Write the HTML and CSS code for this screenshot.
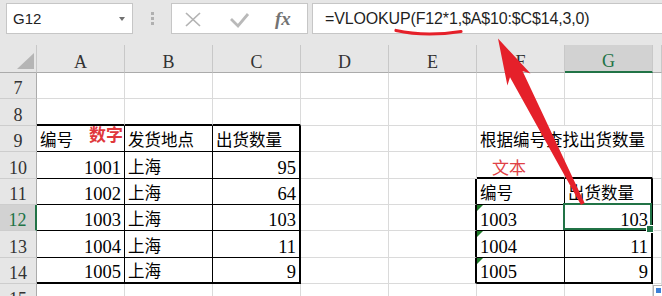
FILE: index.html
```html
<!DOCTYPE html>
<html lang="zh-CN">
<head>
    <meta charset="UTF-8">
    <title>VLOOKUP</title>
    <link rel="stylesheet" href="styles.css">
</head>
<body>
    <div class="toolbar">
        <div class="namebox"><span>G12</span><span class="caret"></span></div>
        <div class="grip"><i></i><i></i><i></i></div>
        <div class="fxbar">
            <svg width="135" height="29" viewBox="0 0 135 29">
                <path d="M14 9 L28 22 M28 9 L14 22" stroke="#b3b3b3" stroke-width="1.7" fill="none"/>
                <path d="M59 15 L66 22 L76 10" stroke="#b9b9b9" stroke-width="2.8" fill="none"/>
                <text x="103" y="21" font-family="Liberation Serif" font-style="italic" font-weight="bold" font-size="19" fill="#737373">fx</text>
            </svg>
        </div>
        <div class="formula">=VLOOKUP(F12*1,$A$10:$C$14,3,0)</div>
    </div>

    <div class="sheet">
        <!-- column headers -->
        <div class="hc corner"><span class="tri"></span></div>
        <div class="hc">A</div>
        <div class="hc">B</div>
        <div class="hc">C</div>
        <div class="hc">D</div>
        <div class="hc">E</div>
        <div class="hc">F</div>
        <div class="hc on">G</div>
        <div class="hc"></div>

        <!-- 7 -->
        <div class="rh">7</div>
        <div class="c"></div><div class="c"></div><div class="c"></div><div class="c"></div>
        <div class="c"></div><div class="c"></div><div class="c"></div><div class="c"></div>

        <!-- 8 -->
        <div class="rh">8</div>
        <div class="c k-B"></div><div class="c k-B"></div><div class="c k-B"></div><div class="c"></div>
        <div class="c"></div><div class="c"></div><div class="c"></div><div class="c"></div>

        <!-- 9 -->
        <div class="rh">9</div>
        <div class="c k-b k-r split"><span class="t">编号</span><span class="note">数字</span></div>
        <div class="c k-b k-r t">发货地点</div>
        <div class="c k-b k-R t">出货数量</div>
        <div class="c"></div>
        <div class="c"></div>
        <div class="c t over">根据编号查找出货数量</div>
        <div class="c"></div>
        <div class="c"></div>

        <!-- 10 -->
        <div class="rh">10</div>
        <div class="c k-b k-r n r">1001</div>
        <div class="c k-b k-r t">上海</div>
        <div class="c k-b k-R n r">95</div>
        <div class="c"></div>
        <div class="c"></div>
        <div class="c k-B"><span class="note thin">文本</span></div>
        <div class="c k-B"></div>
        <div class="c"></div>

        <!-- 11 -->
        <div class="rh">11</div>
        <div class="c k-b k-r n r">1002</div>
        <div class="c k-b k-r t">上海</div>
        <div class="c k-b k-R n r">64</div>
        <div class="c"></div>
        <div class="c k-R"></div>
        <div class="c k-b k-r t">编号</div>
        <div class="c k-b k-R t">出货数量</div>
        <div class="c"></div>

        <!-- 12 -->
        <div class="rh on">12</div>
        <div class="c k-b k-r n r">1003</div>
        <div class="c k-b k-r t">上海</div>
        <div class="c k-b k-R n r">103</div>
        <div class="c"></div>
        <div class="c k-R"></div>
        <div class="c k-b k-r n flag">1003</div>
        <div class="c k-b k-R n r sel">103</div>
        <div class="c"></div>

        <!-- 13 -->
        <div class="rh">13</div>
        <div class="c k-b k-r n r">1004</div>
        <div class="c k-b k-r t">上海</div>
        <div class="c k-b k-R n r">11</div>
        <div class="c"></div>
        <div class="c k-R"></div>
        <div class="c k-b k-r n flag">1004</div>
        <div class="c k-b k-R n r">11</div>
        <div class="c"></div>

        <!-- 14 -->
        <div class="rh">14</div>
        <div class="c k-B k-r n r">1005</div>
        <div class="c k-B k-r t">上海</div>
        <div class="c k-B k-R n r">9</div>
        <div class="c"></div>
        <div class="c k-R"></div>
        <div class="c k-B k-r n flag">1005</div>
        <div class="c k-B k-R n r">9</div>
        <div class="c"></div>

        <!-- 15 -->
        <div class="rh">15</div>
        <div class="c"></div><div class="c"></div><div class="c"></div><div class="c"></div>
        <div class="c"></div><div class="c"></div><div class="c"></div><div class="c"></div>
    </div>

    <div class="qa"></div>

    <!-- red annotation drawn on top of the screenshot -->
    <svg class="marks" width="662" height="296" viewBox="0 0 662 296">
        <path d="M396 30.5 Q425 37 461 31.5" stroke="#e5202a" stroke-width="3.2" stroke-linecap="round" fill="none"/>
        <polygon fill="#e5202a" points="498,38.5 530.5,73.5 522.5,70.9 584.6,203.1 581,205 510,77.3 507.4,85.4"/>
    </svg>
</body>
</html>
```

FILE: styles.css
```css
* {
    box-sizing: border-box;
}
body {
    margin: 0;
    width: 662px;
    height: 296px;
    overflow: hidden;
    position: relative;
    background: #e6e6e6;
    font-family: "Liberation Serif", "Noto Sans CJK SC", serif;
    color: #000;
}

/* formula bar */
.toolbar {
    display: flex;
    align-items: flex-start;
    height: 45px;
    padding-top: 3px;
}
.namebox {
    margin-left: 6px;
    width: 127px;
    height: 31px;
    background: #fff;
    border: 1px solid #c6c6c6;
    display: flex;
    align-items: center;
    justify-content: space-between;
    padding: 0 7px 0 6px;
    font: 15px "Liberation Sans", sans-serif;
    color: #222;
}
.caret {
    width: 0;
    height: 0;
    border-left: 3.5px solid transparent;
    border-right: 3.5px solid transparent;
    border-top: 4px solid #707070;
}
.grip {
    width: 38px;
    display: flex;
    flex-direction: column;
    align-items: center;
    gap: 2px;
    padding-top: 9px;
}
.grip i {
    width: 3px;
    height: 3px;
    background: #b0b0b0;
}
.fxbar {
    width: 137px;
    height: 31px;
    background: #fff;
    border: 1px solid #c6c6c6;
}
.fxbar svg {
    display: block;
}
.formula {
    flex: 1;
    margin-left: 4px;
    margin-right: -10px;
    height: 31px;
    background: #fff;
    border: 1px solid #c6c6c6;
    padding-left: 12px;
    font: 16px "Liberation Sans", sans-serif;
    letter-spacing: -0.15px;
    line-height: 29px;
    color: #1f1f1f;
}

/* grid */
.sheet {
    display: grid;
    grid-template-columns: 37px repeat(7, 88px) 1fr;
    grid-template-rows: 28px 26px 27px 26px 27px 26px 26px 27px 26px 26px;
}
.c, .hc, .rh {
    display: flex;
    align-items: flex-end;
    white-space: nowrap;
    line-height: 20px;
}
.hc {
    justify-content: center;
    border-right: 1px solid #c8c8c8;
    border-bottom: 1px solid #ababab;
    font-size: 18px;
    color: #333;
}
.hc.on {
    background: #d2d2d2;
    color: #217346;
    border-bottom: 2px solid #217346;
}
.corner {
    justify-content: flex-end;
    padding: 0 2px 3px 0;
}
.tri {
    width: 0;
    height: 0;
    border-left: 17px solid transparent;
    border-bottom: 16px solid #b5b5b5;
}
.rh {
    justify-content: center;
    border-right: 1px solid #ababab;
    border-bottom: 1px solid #cdcdcd;
    font-size: 18px;
    color: #333;
}
.rh.on {
    background: #d2d2d2;
    color: #217346;
    border-right: 2px solid #217346;
}
.c {
    background: #fff;
    border-right: 1px solid #dadada;
    border-bottom: 1px solid #dadada;
    padding: 0 3px;
}

/* table borders */
.k-b { border-bottom: 1px solid #000; }
.k-B { border-bottom: 2px solid #000; }
.k-r { border-right: 1px solid #000; }
.k-R { border-right: 2px solid #000; }

.t {
    font-family: "Noto Sans CJK SC", sans-serif;
    font-size: 16.5px;
    padding-bottom: 2px;
}
.n {
    font-size: 18.5px;
}
.r {
    justify-content: flex-end;
}
.split {
    justify-content: space-between;
}
/* text spilling into the next cell, like Excel does */
.over {
    border-right-color: transparent;
    z-index: 1;
}
.note {
    color: #e0383c;
    font-family: "Noto Sans CJK SC", sans-serif;
    font-size: 17px;
    font-weight: bold;
    align-self: flex-start;
    margin: -2px -2px 0 0;
}
.note.thin {
    font-weight: normal;
    align-self: flex-end;
    margin: 0 0 0 12px;
    color: #e04246;
}

/* error flag + active cell */
.flag {
    position: relative;
}
.flag::before {
    content: "";
    position: absolute;
    top: 0;
    left: 0;
    border-top: 6px solid #1f7a2a;
    border-right: 6px solid transparent;
}
.sel {
    position: relative;
    z-index: 1;
}
.sel::after {
    content: "";
    position: absolute;
    left: -2px;
    top: -2px;
    right: -1px;
    bottom: 0;
    border: 2px solid #217346;
}
.sel::before {
    content: "";
    position: absolute;
    right: -3px;
    bottom: -3px;
    width: 6px;
    height: 6px;
    background: #217346;
    border: 1px solid #fff;
    z-index: 1;
}

.qa {
    position: absolute;
    left: 653px;
    top: 285px;
    width: 14px;
    height: 14px;
    background: #fff;
    border: 1px solid #b5b5b5;
}
.qa::after {
    content: "";
    position: absolute;
    left: 2px;
    top: 2px;
    width: 5px;
    height: 5px;
    background: #3c7fd6;
}

.marks {
    position: absolute;
    left: 0;
    top: 0;
    z-index: 2;
}
```
